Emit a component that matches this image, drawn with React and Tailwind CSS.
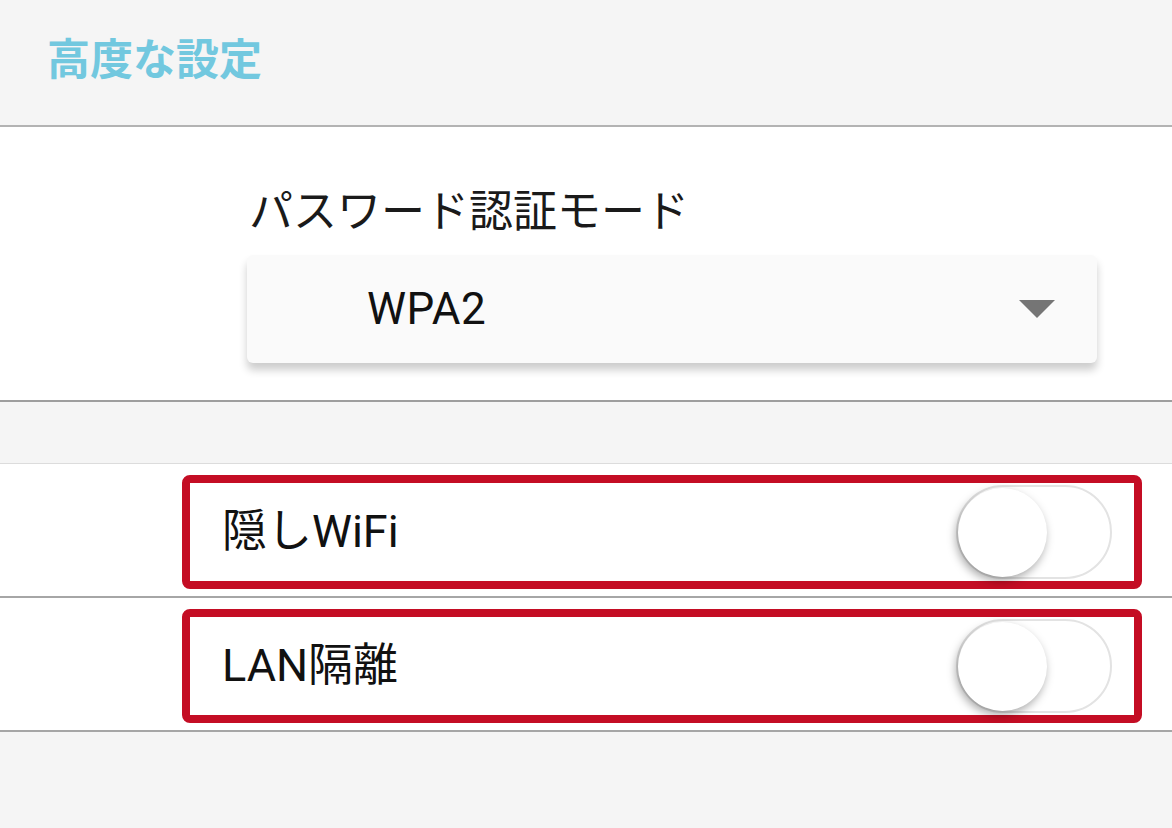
import { useState } from 'react'

function Toggle({ on, onChange }) {
  return (
    <button
      onClick={() => onChange(!on)}
      className="relative w-[156px] h-[94px] rounded-full border-2 border-[#e3e3e3] bg-white shrink-0"
    >
      <span
        className={`absolute top-[1px] w-[89px] h-[89px] rounded-full bg-white shadow-[-2px_4px_10px_rgba(0,0,0,0.35)] ${on ? 'left-[63px]' : 'left-[0px]'}`}
      />
    </button>
  )
}

export default function App() {
  const [hidden, setHidden] = useState(false)
  const [isolate, setIsolate] = useState(false)

  const rows = [
    { key: 'hidden', label: '隠しWiFi', on: hidden, set: setHidden },
    { key: 'lan', label: 'LAN隔離', on: isolate, set: setIsolate },
  ]

  return (
    <div className="w-[1172px] h-[828px] bg-[#f5f5f5] font-['Roboto','Noto_Sans_CJK_JP',sans-serif] overflow-hidden">
      {/* Header */}
      <div className="h-[127px] border-b-2 border-[#b3b3b3] pl-[47px] pt-[31px]">
        <h1 className="text-[43px] leading-[58px] font-bold text-[#72c8df]">高度な設定</h1>
      </div>

      {/* Auth mode */}
      <div className="bg-white h-[275px] border-b-2 border-[#9e9e9e] pl-[247px] pr-[75px] pt-[54px]">
        <p className="pl-[2px] text-[44px] leading-[62px] text-[#1a1a1a]">パスワード認証モード</p>
        <div className="mt-[12px] h-[108px] rounded-[6px] bg-[#fafafa] shadow-[0_7px_9px_rgba(0,0,0,0.2)] flex items-center pl-[120px] pr-[42px]">
          <span className="flex-1 text-[44px] tracking-[0.5px] text-[#111]">WPA2</span>
          <svg width="36" height="18" viewBox="0 0 36 18">
            <path d="M0 0 L36 0 L18 18 Z" fill="#757575" />
          </svg>
        </div>
      </div>

      <div className="h-[62px] border-b border-[#dcdcdc]" />

      {/* Toggles */}
      {rows.map(r => (
        <div key={r.key} className="bg-white h-[134px] border-b-2 border-[#a6a6a6] pl-[182px] pr-[30px] pt-[11px]">
          <div className="h-[114px] border-[8px] border-[#c40d24] rounded-[8px] flex items-center pl-[32px] pr-[22px]">
            <span className="flex-1 text-[45px] text-[#111]">{r.label}</span>
            <Toggle on={r.on} onChange={r.set} />
          </div>
        </div>
      ))}
    </div>
  )
}
